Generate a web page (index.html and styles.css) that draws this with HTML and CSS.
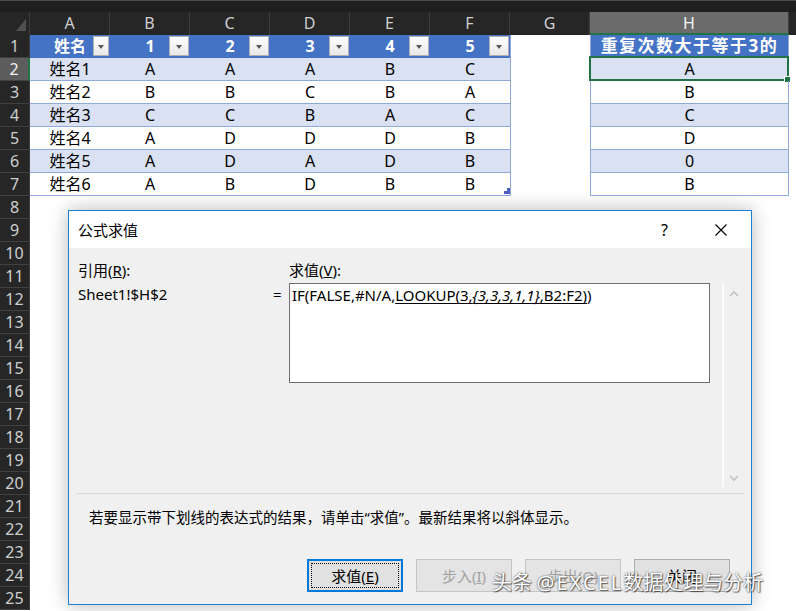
FILE: index.html
```html
<!DOCTYPE html>
<html lang="zh-CN">
<head>
  <meta charset="UTF-8">
  <meta name="viewport" content="width=device-width, initial-scale=1.0">
  <title>公式求值</title>
  <link rel="stylesheet" href="styles.css">
</head>
<body>
  <div class="window">
    <div class="topbar"></div>

    <div class="col-headers">
      <div class="corner"><span class="corner-mark"></span></div>
      <div class="col-head">A</div>
      <div class="col-head">B</div>
      <div class="col-head">C</div>
      <div class="col-head">D</div>
      <div class="col-head">E</div>
      <div class="col-head">F</div>
      <div class="col-head">G</div>
      <div class="col-head col-head-active">H</div>
      <div class="col-head col-head-rest"></div>
    </div>

    <div class="sheet">
      <div class="row-headers">
        <div class="row-head">1</div>
        <div class="row-head row-head-active">2</div>
        <div class="row-head">3</div>
        <div class="row-head">4</div>
        <div class="row-head">5</div>
        <div class="row-head">6</div>
        <div class="row-head">7</div>
        <div class="row-head">8</div>
        <div class="row-head">9</div>
        <div class="row-head">10</div>
        <div class="row-head">11</div>
        <div class="row-head">12</div>
        <div class="row-head">13</div>
        <div class="row-head">14</div>
        <div class="row-head">15</div>
        <div class="row-head">16</div>
        <div class="row-head">17</div>
        <div class="row-head">18</div>
        <div class="row-head">19</div>
        <div class="row-head">20</div>
        <div class="row-head">21</div>
        <div class="row-head">22</div>
        <div class="row-head">23</div>
        <div class="row-head">24</div>
        <div class="row-head">25</div>
      </div>

      <div class="cells">
        <div class="row row-title">
          <div class="cell">姓名<span class="filter filter-narrow"></span></div>
          <div class="cell">1<span class="filter"></span></div>
          <div class="cell">2<span class="filter"></span></div>
          <div class="cell">3<span class="filter"></span></div>
          <div class="cell">4<span class="filter"></span></div>
          <div class="cell">5<span class="filter"></span></div>
          <div class="cell cell-gap"></div>
          <div class="cell cell-h cell-h-title">重复次数大于等于3的</div>
        </div>
        <div class="row row-band">
          <div class="cell">姓名1</div>
          <div class="cell">A</div>
          <div class="cell">A</div>
          <div class="cell">A</div>
          <div class="cell">B</div>
          <div class="cell">C</div>
          <div class="cell cell-gap"></div>
          <div class="cell cell-h">A<span class="selection"></span></div>
        </div>
        <div class="row">
          <div class="cell">姓名2</div>
          <div class="cell">B</div>
          <div class="cell">B</div>
          <div class="cell">C</div>
          <div class="cell">B</div>
          <div class="cell">A</div>
          <div class="cell cell-gap"></div>
          <div class="cell cell-h">B</div>
        </div>
        <div class="row row-band">
          <div class="cell">姓名3</div>
          <div class="cell">C</div>
          <div class="cell">C</div>
          <div class="cell">B</div>
          <div class="cell">A</div>
          <div class="cell">C</div>
          <div class="cell cell-gap"></div>
          <div class="cell cell-h">C</div>
        </div>
        <div class="row">
          <div class="cell">姓名4</div>
          <div class="cell">A</div>
          <div class="cell">D</div>
          <div class="cell">D</div>
          <div class="cell">D</div>
          <div class="cell">B</div>
          <div class="cell cell-gap"></div>
          <div class="cell cell-h">D</div>
        </div>
        <div class="row row-band">
          <div class="cell">姓名5</div>
          <div class="cell">A</div>
          <div class="cell">D</div>
          <div class="cell">A</div>
          <div class="cell">D</div>
          <div class="cell">B</div>
          <div class="cell cell-gap"></div>
          <div class="cell cell-h">0</div>
        </div>
        <div class="row">
          <div class="cell">姓名6</div>
          <div class="cell">A</div>
          <div class="cell">B</div>
          <div class="cell">D</div>
          <div class="cell">B</div>
          <div class="cell">B<span class="resize-mark"></span></div>
          <div class="cell cell-gap"></div>
          <div class="cell cell-h">B</div>
        </div>
      </div>
    </div>

    <!-- 公式求值 dialog -->
    <div class="dialog">
      <div class="dialog-title">
        <span class="dialog-caption">公式求值</span>
        <span class="dialog-help">?</span>
        <span class="dialog-close">
          <svg width="12" height="12" viewBox="0 0 12 12"><path d="M0.5 0.5 L11.5 11.5 M11.5 0.5 L0.5 11.5" stroke="#000" stroke-width="1.1" fill="none"/></svg>
        </span>
      </div>
      <div class="dialog-body">
        <div class="eval-grid">
          <div class="label">引用(<u>R</u>):</div>
          <div></div>
          <div class="label">求值(<u>V</u>):</div>
          <div></div>
          <div class="ref">Sheet1!$H$2</div>
          <div class="eq">=</div>
          <div class="formula-box">IF(FALSE,#N/A,<u>LOOKUP(3,<i>{3,3,3,1,1}</i>,B2:F2)</u>)</div>
          <div class="scrollbar">
            <svg class="scroll-up" width="10" height="7" viewBox="0 0 10 7"><polyline points="1,6 5,2 9,6" stroke="#c3c3c3" stroke-width="1.6" fill="none"/></svg>
            <svg class="scroll-down" width="10" height="7" viewBox="0 0 10 7"><polyline points="1,1 5,5 9,1" stroke="#c3c3c3" stroke-width="1.6" fill="none"/></svg>
          </div>
        </div>
        <div class="divider"></div>
        <p class="hint">若要显示带下划线的表达式的结果，请单击“求值”。最新结果将以斜体显示。</p>
        <div class="buttons">
          <button class="btn btn-default"><span class="btn-focus">求值(<u>E</u>)</span></button>
          <button class="btn" disabled>步入(<u>I</u>)</button>
          <button class="btn" disabled>步出(<u>O</u>)</button>
          <button class="btn">关闭</button>
        </div>
      </div>
    </div>

    <div class="watermark">头条 <span class="watermark-latin">@EXCEL</span>数据处理与分析</div>
  </div>
</body>
</html>
```

FILE: styles.css
```css
/* page */
body {
  margin: 0;
  background: #ffffff;
  font-family: "Noto Sans", "Noto Sans CJK SC", sans-serif;
  overflow: hidden;
}

.window {
  position: relative;
  width: 796px;
  height: 611px;
  overflow: hidden;
  background: #ffffff;
}

.topbar {
  height: 12px;
  box-sizing: border-box;
  border-top: 1px solid #4a4a4a;
  background: #1f1f1f;
}

/* column headers */
.col-headers {
  display: flex;
  height: 23px;
  background: #262626;
}

.corner {
  position: relative;
  width: 30px;
  flex: none;
  box-sizing: border-box;
  border-right: 1px solid #3d3d3d;
}

.corner-mark {
  position: absolute;
  right: 3px;
  bottom: 4px;
  width: 10px;
  height: 12px;
  background: #505050;
  clip-path: polygon(100% 0, 100% 100%, 0 100%);
}

.col-head {
  width: 80px;
  flex: none;
  box-sizing: border-box;
  border-right: 1px solid #3d3d3d;
  color: #cfcfcf;
  font-size: 16px;
  line-height: 23px;
  text-align: center;
}

.col-head-active {
  width: 199px;
  background: #6b6b6b;
  color: #f4f4f4;
  border-bottom: 2px solid #217346;
  line-height: 22px;
}

.col-head-rest {
  flex: 1;
  border-right: none;
}

/* sheet */
.sheet {
  display: flex;
}

.row-headers {
  width: 30px;
  flex: none;
}

.row-head {
  height: 23px;
  box-sizing: border-box;
  border-bottom: 1px solid #414141;
  border-right: 1px solid #3d3d3d;
  background: #262626;
  color: #cfcfcf;
  font-size: 16px;
  line-height: 22px;
  text-align: center;
}

.row-head-active {
  background: #5d5d5d;
  color: #f4f4f4;
  border-right: 2px solid #217346;
}

.cells {
  flex: 1;
}

.row {
  display: grid;
  grid-template-columns: repeat(7, 80px) 199px;
  height: 23px;
}

.cell {
  position: relative;
  box-sizing: border-box;
  border-bottom: 1px solid #8ea9db;
  font-size: 16px;
  line-height: 22px;
  text-align: center;
  color: #000000;
  white-space: nowrap;
}

.cell-h {
  border-left: 1px solid #8ea9db;
  border-right: 1px solid #8ea9db;
}

.row-title .cell {
  background: #4472c4;
  color: #ffffff;
  font-weight: bold;
  border-bottom-color: #4472c4;
}

.row-title .cell-h-title {
  border-left-color: #8ea9db;
  border-right-color: #8ea9db;
  font-size: 17px;
  letter-spacing: 1.5px;
}

.row-band .cell {
  background: #d9e1f2;
}

.row .cell-gap {
  background: none;
  border-bottom: none;
  border-left: 1px solid #8ea9db;
}

.filter {
  position: absolute;
  top: 1px;
  right: 1px;
  width: 20px;
  height: 20px;
  box-sizing: border-box;
  border: 1px solid #b0b0b0;
  background: linear-gradient(#ffffff, #e9e9e9);
}

.filter::after {
  content: "";
  position: absolute;
  left: 6px;
  top: 8px;
  border-left: 3px solid transparent;
  border-right: 3px solid transparent;
  border-top: 4px solid #595959;
}

.filter-narrow {
  width: 16px;
}

.filter-narrow::after {
  left: 4px;
}

.selection {
  position: absolute;
  left: -2px;
  top: -2px;
  right: -1px;
  bottom: -1px;
  border: 2px solid #217346;
}

.selection::after {
  content: "";
  position: absolute;
  right: -4px;
  bottom: -4px;
  width: 5px;
  height: 5px;
  background: #217346;
  border: 1px solid #ffffff;
}

.resize-mark {
  position: absolute;
  right: 0;
  bottom: 1px;
  width: 6px;
  height: 6px;
  background: #4a5fc1;
  clip-path: polygon(50% 0, 100% 0, 100% 100%, 0 100%, 0 50%, 50% 50%);
}

/* dialog */
.dialog {
  position: absolute;
  left: 68px;
  top: 210px;
  width: 684px;
  height: 395px;
  box-sizing: border-box;
  border: 1px solid #1c80d6;
  background: #f0f0f0;
  box-shadow: 0 0 18px rgba(0, 0, 0, 0.28);
  display: flex;
  flex-direction: column;
  font-size: 15px;
  color: #000000;
}

.dialog-title {
  display: flex;
  align-items: center;
  height: 37px;
  flex: none;
  padding-left: 9px;
  background: #ffffff;
}

.dialog-caption {
  flex: 1;
}

.dialog-help {
  margin-right: 47px;
  font-size: 16px;
}

.dialog-close {
  display: flex;
  margin-right: 24px;
}

.dialog-body {
  flex: 1;
  padding: 11px 0 0 9px;
}

.eval-grid {
  display: grid;
  grid-template-columns: 195px 16px 421px 32px;
  grid-template-rows: 22px 204px;
  row-gap: 2px;
}

.label,
.ref,
.eq {
  line-height: 22px;
}

.formula-box {
  height: 100px;
  box-sizing: border-box;
  border: 1px solid #6e6e6e;
  background: #ffffff;
  padding: 1px 2px;
  line-height: 20px;
  white-space: nowrap;
}

.formula-box u {
  text-underline-offset: 2px;
}

.scrollbar {
  position: relative;
  margin-left: 12px;
  width: 20px;
  box-sizing: border-box;
  border-left: 2px solid #fbfbfb;
}

.scroll-up {
  position: absolute;
  left: 5px;
  top: 7px;
}

.scroll-down {
  position: absolute;
  left: 5px;
  bottom: 5px;
}

.divider {
  margin: 6px 0 0 -1px;
  width: 666px;
  height: 1px;
  background: #d8d8d8;
}

.hint {
  margin: 13px 0 0 11px;
  font-size: 14.5px;
  line-height: 20px;
}

.buttons {
  display: flex;
  justify-content: flex-end;
  gap: 13px;
  margin-top: 32px;
  padding-right: 21px;
}

.btn {
  width: 96px;
  height: 33px;
  box-sizing: border-box;
  padding: 0;
  border: 1px solid #adadad;
  background: #e1e1e1;
  font-family: inherit;
  font-size: 15px;
  color: #000000;
}

.btn:disabled {
  background: #e4e4e4;
  border-color: #c5c5c5;
  color: #a2a2a2;
}

.btn-default {
  border: 2px solid #0078d7;
  padding: 2px;
}

.btn-focus {
  display: flex;
  align-items: center;
  justify-content: center;
  height: 100%;
  box-sizing: border-box;
  border: 1px dotted #000000;
}

/* watermark */
.watermark {
  position: absolute;
  left: 492px;
  top: 568px;
  font-family: "Noto Sans CJK SC", sans-serif;
  font-size: 20px;
  line-height: 28px;
  color: #ffffff;
  white-space: nowrap;
  text-shadow: 0 0 2px rgba(0, 0, 0, 0.75), 1px 1px 1px rgba(0, 0, 0, 0.5);
}

.watermark-latin {
  font-family: "Noto Sans", sans-serif;
  letter-spacing: 2px;
}
```
